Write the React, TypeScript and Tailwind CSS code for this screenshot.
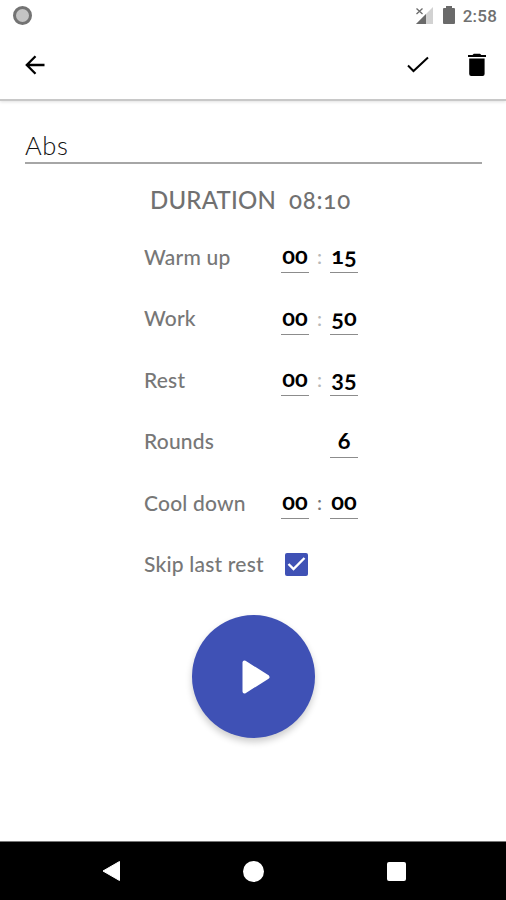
import type { ReactNode } from 'react';

function StatusBar() {
  return (
    <div className="flex h-[30px] items-center justify-between pl-[13px] pr-[9px]">
      <div className="mt-px h-[19px] w-[19px] rounded-full border-[3px] border-[#737373] bg-[#c4c4c4]" />
      <div className="flex items-center">
        <svg className="mr-[1px]" width="20" height="20" viewBox="0 0 20 20">
          <path d="M19 2v17H2z" fill="#d2d2d2" />
          <path d="M12 9v10H2z" fill="#6a6a6a" />
          <path d="M2.5 3.5l6 5.5M8.5 3.5l-6 5.5" stroke="#6a6a6a" strokeWidth="1.3" />
        </svg>
        <svg className="ml-[7px]" width="14" height="20" viewBox="0 0 14 20">
          <path d="M4 1h6v2h2q1 0 1 1v14q0 1-1 1H2q-1 0-1-1V4q0-1 1-1h2z" fill="#6a6a6a" />
        </svg>
        <span className="ml-[7px] mt-[2px] font-['Roboto',sans-serif] text-[17px] font-medium leading-5 tracking-[0.2px] text-[#707070] normal-nums">
          2:58
        </span>
      </div>
    </div>
  );
}

function Toolbar() {
  return (
    <div className="flex h-[69px] items-center justify-between px-[24px]">
      <svg width="22" height="20" viewBox="0 0 22 20" fill="none" stroke="#000" strokeWidth="2.3">
        <path d="M20.5 10H3M11.5 1.3L2.8 10l8.7 8.7" />
      </svg>
      <div className="-mr-[5px] flex items-center">
        <svg width="24" height="20" viewBox="0 0 24 20" fill="none" stroke="#000" strokeWidth="2">
          <path d="M2 10.5l5.5 5.5L22 2.5" />
        </svg>
        <svg className="ml-[37px]" width="20" height="24" viewBox="0 0 20 24">
          <path d="M1 2h4.5l1.3-1.3h6.2L14.3 2H19v2H1zM2.2 5.5h15.4v15.5q0 2-2 2H4.2q-2 0-2-2z" />
        </svg>
      </div>
    </div>
  );
}

function NumberField({ value }: { value: string }) {
  return (
    <div className="flex h-[31px] w-[28px] justify-center border-b border-[#8c8c8c] text-[23.5px] font-bold leading-[26px] text-black">
      {value}
    </div>
  );
}

function Row({ label, children }: { label: ReactNode; children: ReactNode }) {
  return (
    <div className="flex h-[61.5px] items-center">
      <div className="-mt-[3px] w-[137px] shrink-0 whitespace-nowrap text-[21px] tracking-[0.2px]">{label}</div>
      {children}
    </div>
  );
}

function Time({ minutes, seconds, dark }: { minutes: string; seconds: string; dark?: boolean }) {
  return (
    <div className="flex items-center">
      <NumberField value={minutes} />
      <span className={dark ? '-mt-[3px] w-[21px] text-center text-[#777]' : '-mt-[3px] w-[21px] text-center text-[#b8b8b8]'}>
        :
      </span>
      <NumberField value={seconds} />
    </div>
  );
}

export default function App() {
  return (
    <div className="flex h-[900px] w-[506px] flex-col overflow-hidden bg-white font-['Lato','Open_Sans',sans-serif] oldstyle-nums">
      <header className="h-[101px] shrink-0 border-b-2 border-[#c8c8c8] shadow-[0_1px_3px_rgba(0,0,0,0.12)]">
        <StatusBar />
        <Toolbar />
      </header>

      <main className="flex-1">
        <div className="ml-[25px] mr-[24px] mt-[27px] h-[36px] border-b-2 border-[#a6a6a6] text-[25.5px] font-light leading-[34px] tracking-[0.7px] text-[#111]">
          Abs
        </div>

        <div className="ml-[150px] mt-[19px] flex h-[34px] items-center text-[24px] font-medium text-[#717171]">
          <span className="w-[139px] tracking-[0.2px]">DURATION</span>
          <span className="tracking-[0.8px]">08:10</span>
        </div>

        <div className="ml-[144px] mt-[10px] text-[20px] font-medium text-[#777]">
          <Row label="Warm up">
            <Time minutes="00" seconds="15" />
          </Row>
          <Row label="Work">
            <Time minutes="00" seconds="50" />
          </Row>
          <Row label="Rest">
            <Time minutes="00" seconds="35" />
          </Row>
          <Row label="Rounds">
            <div className="ml-[49px]">
              <NumberField value="6" />
            </div>
          </Row>
          <Row label="Cool down">
            <Time minutes="00" seconds="00" dark />
          </Row>
          <Row label="Skip last rest">
            <div className="-mt-[2px] ml-[4px] flex h-[23px] w-[23px] items-center justify-center rounded-[2px] bg-[#3f51b5]">
              <svg width="19" height="16" viewBox="0 0 19 16" fill="none" stroke="#fff" strokeWidth="2.4">
                <path d="M1.5 8l5 5L17.5 2" />
              </svg>
            </div>
          </Row>
        </div>

        <button className="ml-[192px] mt-[19px] flex h-[123px] w-[123px] items-center justify-center rounded-full bg-[#3f51b5] shadow-[0_4px_7px_rgba(0,0,0,0.2)]">
          <svg className="ml-[5px]" width="28" height="34" viewBox="0 0 28 34">
            <path d="M2.5 2.5v29L25.5 17z" fill="#fff" stroke="#fff" strokeWidth="4" strokeLinejoin="round" />
          </svg>
        </button>
      </main>

      <nav className="flex h-[59px] shrink-0 items-center border-t border-[#777] bg-black pl-[102px]">
        <svg width="19" height="22" viewBox="0 0 19 22">
          <path d="M17.5 1.5v19L1 11z" fill="#fff" stroke="#fff" strokeLinejoin="round" />
        </svg>
        <div className="ml-[122px] h-[21px] w-[21px] rounded-full bg-white" />
        <div className="ml-[123px] h-[19px] w-[19px] rounded-[2px] bg-white" />
      </nav>
    </div>
  );
}
